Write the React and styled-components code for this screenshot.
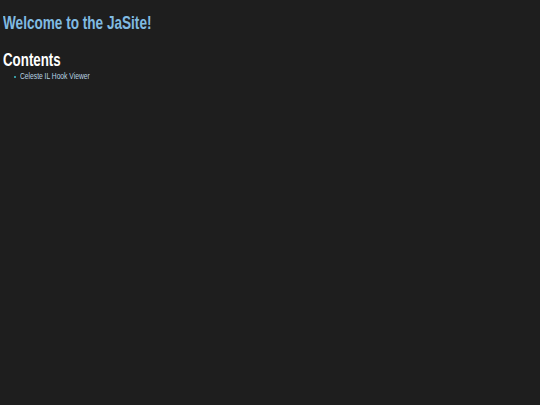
import React from 'react'
import styled, { createGlobalStyle } from 'styled-components'

const Global = createGlobalStyle`
  html, body {
    margin: 0;
    background: #1e1e1e;
    font-family: "Liberation Sans", Arial, sans-serif;
  }
`

const Page = styled.div`
  padding: 11px 3px;
  min-height: 405px;
  box-sizing: border-box;
  background: #1e1e1e;
`

// the reference text is set in a narrow face, so squeeze the line
const Squeeze = styled.span`
  display: inline-block;
  white-space: nowrap;
  transform: scaleX(${p => p.$x});
  transform-origin: left center;
`

const Title = styled.h1`
  margin: 0;
  font-size: 19px;
  font-weight: bold;
  color: #80bbe2;
  line-height: 24px;
`

const Heading = styled.h2`
  margin: 14px 0 0;
  font-size: 18px;
  font-weight: bold;
  color: #ffffff;
  line-height: 22px;
`

const List = styled.ul`
  margin: 0;
  padding-left: 11px;
  list-style: none;
`

const Item = styled.li`
  display: flex;
  align-items: center;
  gap: 4px;
  font-size: 9px;
  color: #b9d4e2;
  line-height: 11px;

  &::before {
    content: "";
    width: 2px;
    height: 2px;
    border-radius: 50%;
    background: #3fc0c8;
  }
`

export default function App() {
  return (
    <Page>
      <Global />
      <Title><Squeeze $x={0.715}>Welcome to the JaSite!</Squeeze></Title>
      <Heading><Squeeze $x={0.74}>Contents</Squeeze></Heading>
      <List>
        <Item><Squeeze $x={0.745}>Celeste IL Hook Viewer</Squeeze></Item>
      </List>
    </Page>
  )
}
